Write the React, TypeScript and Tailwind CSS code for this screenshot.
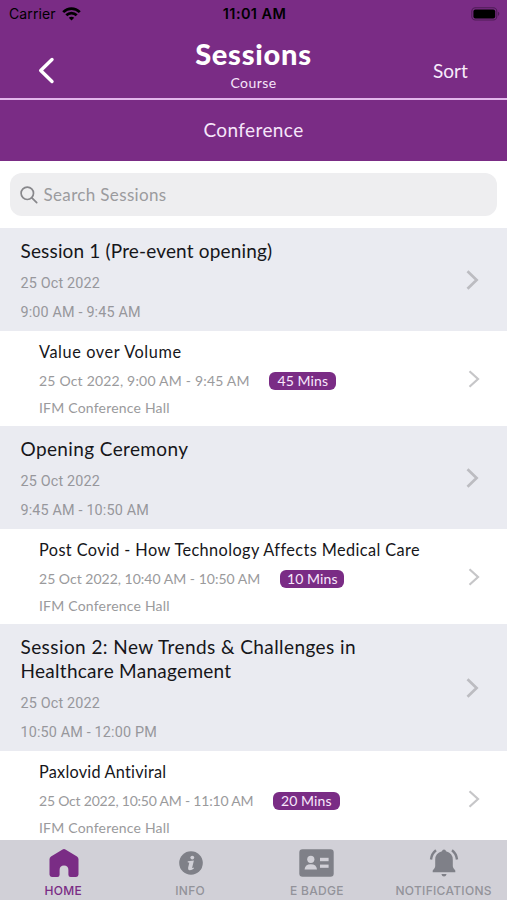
import React from "react";

type Talk = { title: string; when: string; whenTracking: string; titleTracking: string; mins: string; badge: string };
type Session = { title: string[]; time: string; tracking: string[]; talk: Talk };

const sessions: Session[] = [
  {
    title: ["Session 1 (Pre-event opening)"],
    time: "9:00 AM - 9:45 AM",
    tracking: ["tracking-[0.16px]"],
    talk: {
      title: "Value over Volume",
      titleTracking: "tracking-[0.6px]",
      when: "25 Oct 2022, 9:00 AM - 9:45 AM",
      whenTracking: "tracking-[0.2px]",
      mins: "45 Mins",
      badge: "ml-[19.5px] w-[67px]",
    },
  },
  {
    title: ["Opening Ceremony"],
    time: "9:45 AM - 10:50 AM",
    tracking: ["tracking-[0.38px]"],
    talk: {
      title: "Post Covid - How Technology Affects Medical Care",
      titleTracking: "tracking-[0.4px]",
      when: "25 Oct 2022, 10:40 AM - 10:50 AM",
      whenTracking: "tracking-[0.01px]",
      mins: "10 Mins",
      badge: "ml-5 w-[64px]",
    },
  },
  {
    title: ["Session 2: New Trends & Challenges in", "Healthcare Management"],
    time: "10:50 AM - 12:00 PM",
    tracking: ["tracking-[0.42px]", "tracking-[0.28px]"],
    talk: {
      title: "Paxlovid Antiviral",
      titleTracking: "tracking-[0.22px]",
      when: "25 Oct 2022, 10:50 AM - 11:10 AM",
      whenTracking: "tracking-[-0.21px]",
      mins: "20 Mins",
      badge: "ml-[19.5px] w-[67px]",
    },
  },
];

function SectionRow({ s }: { s: Session }) {
  return (
    <div className={`flex shrink-0 items-center justify-between bg-[#eaebf1] pl-[20.5px] pr-[28px] ${s.title.length > 1 ? "h-[127px]" : "h-[103px]"}`}>
      <div className="h-full pt-[11px] whitespace-nowrap">
        {s.title.map((line, i) => (
          <div key={line} className={`h-[24px] text-[19px] leading-[24px] text-[#16161a] ${s.tracking[i]}`}>{line}</div>
        ))}
        <div className="mt-[10px] font-[Roboto] text-[14.4px] leading-[22px] tracking-[0.15px] text-[#97979c]">25 Oct 2022</div>
        <div className="mt-[7px] font-[Roboto] text-[14.4px] leading-[22px] tracking-[0.15px] text-[#97979c]">{s.time}</div>
      </div>
      <svg width="13" height="22" viewBox="0 0 13 22" fill="none" stroke="#bcbcc1" strokeWidth="2.7" className="mt-[1px]">
        <path d="M1.5 2.3 L10.6 11 L1.5 19.7" />
      </svg>
    </div>
  );
}

function TalkRow({ t }: { t: Talk }) {
  return (
    <div className="flex h-[95px] shrink-0 items-center justify-between bg-white pl-[39px] pr-[27px]">
      <div className="h-full pt-[11px] whitespace-nowrap">
        <div className={`text-[16.3px] leading-[20px] text-[#16161a] ${t.titleTracking}`}>{t.title}</div>
        <div className="mt-[9px] flex h-[20px] items-center">
          <span className={`text-[14px] leading-[20px] text-[#9a9a9c] ${t.whenTracking}`}>{t.when}</span>
          <span className={`flex h-[18px] items-center justify-center rounded-[6px] bg-[#7a2c85] text-[14px] leading-[18px] tracking-[0.1px] text-[#f8e8fc] ${t.badge}`}>{t.mins}</span>
        </div>
        <div className="mt-[7px] text-[14px] leading-[20px] tracking-[0.2px] text-[#9a9a9c]">IFM Conference Hall</div>
      </div>
      <svg width="12" height="18" viewBox="0 0 12 18" fill="none" stroke="#c6c6c8" strokeWidth="2.2">
        <path d="M1.5 1.3 L10 9 L1.5 16.7" />
      </svg>
    </div>
  );
}

function TabItem({ label, active, children }: { label: string; active?: boolean; children: React.ReactNode }) {
  return (
    <div className={`flex flex-1 flex-col items-center ${active ? "text-[#7a2c85]" : "text-[#7f8088]"}`}>
      <div className="flex h-[40px] items-center justify-center pt-[5px]">{children}</div>
      <div className={`mt-[2px] font-[Inter] text-[12px] leading-[18px] font-medium tracking-[0.3px] whitespace-nowrap ${active ? "" : "text-[#93939a]"}`}>{label}</div>
    </div>
  );
}

export default function App() {
  return (
    <div className="flex h-[900px] w-[507px] flex-col overflow-hidden bg-white font-[Lato,sans-serif]">
      <header className="flex h-[161px] shrink-0 flex-col bg-[#7a2c85]">
        <div className="grid h-[28px] grid-cols-3 items-center pr-[7px] pl-[9px] font-[Inter] text-black">
          <div className="flex items-center gap-[6px]">
            <span className="text-[14px] leading-[20px] tracking-[0.1px]">Carrier</span>
            <svg width="19" height="14" viewBox="0 0 19 14" fill="none" stroke="black" strokeWidth="2.7">
              <path d="M1.2 5.1 C6 0.4 13 0.4 17.8 5.1" />
              <path d="M4.3 8.3 C7.2 5.4 11.8 5.4 14.7 8.3" />
              <path d="M9.5 13.5 L6.8 10.7 C8.2 9.4 10.8 9.4 12.2 10.7 Z" fill="black" stroke="none" />
            </svg>
          </div>
          <div className="text-center text-[14.5px] leading-[20px] font-semibold tracking-[0.4px] whitespace-nowrap">11:01 AM</div>
          <div className="flex justify-end">
            <svg width="29" height="14" viewBox="0 0 29 14">
              <rect x="0.8" y="0.8" width="25" height="12.2" rx="3.6" fill="none" stroke="#4f1c57" strokeWidth="1.1" />
              <rect x="2.4" y="2.4" width="21.8" height="9" rx="2" fill="black" />
              <path d="M27 4.8 C28.8 5.5 28.8 8.3 27 9 Z" fill="#4f1c57" />
            </svg>
          </div>
        </div>
        <div className="grid h-[70px] grid-cols-[120px_1fr_120px] text-white">
          <div className="pt-[29px] pl-[38px]">
            <svg width="17" height="27" viewBox="0 0 17 27" fill="none" stroke="white" strokeWidth="3.4" strokeLinecap="round" strokeLinejoin="round">
              <path d="M14 2.5 L2.7 13.5 L14 24.5" />
            </svg>
          </div>
          <div className="pt-[9px] text-center">
            <div className="text-[29px] leading-[34px] font-black tracking-[0.75px]">Sessions</div>
            <div className="mt-[3px] text-[14px] leading-[18px] tracking-[0.45px] text-[#f6e6fa]">Course</div>
          </div>
          <div className="pt-[30px] pl-[46px] text-[19px] leading-[25px] text-[#f8ebfb]">Sort</div>
        </div>
        <div className="h-[2px] bg-[#e3b6ec]" />
        <div className="flex flex-1 items-center justify-center text-[19px] tracking-[0.4px] text-[#f6e6fa]">Conference</div>
      </header>

      <div className="h-[67px] shrink-0 px-[10px] pt-[12px]">
        <div className="flex h-[43px] w-[487px] items-center rounded-[12px] bg-[#eeeef0] pl-[10px]">
          <svg width="18" height="18" viewBox="0 0 18 18" fill="none" stroke="#87878b" strokeWidth="1.7" strokeLinecap="round">
            <circle cx="7.3" cy="7.3" r="6.2" />
            <path d="M11.9 11.9 L16.7 16.7" />
          </svg>
          <span className="ml-[5.5px] text-[17px] tracking-[0.35px] text-[#9b9b9e]">Search Sessions</span>
        </div>
      </div>

      <main className="flex h-[612px] shrink-0 flex-col overflow-hidden">
        {sessions.map((s) => (
          <React.Fragment key={s.time}>
            <SectionRow s={s} />
            <TalkRow t={s.talk} />
          </React.Fragment>
        ))}
      </main>

      <nav className="flex h-[60px] shrink-0 bg-[#d1d0d7]">
        <TabItem label="HOME" active>
          <svg width="30" height="30" viewBox="0 0 30 30" fill="currentColor" className="ml-[1px]">
            <path d="M13.6 1.5 Q15 .6 16.4 1.5 L28 8.6 Q29.5 9.6 29.5 11.3 V26.6 Q29.5 29 27.1 29 H21.6 Q19.4 29 19.4 26.8 V22 Q19.4 17.4 15 17.4 Q10.6 17.4 10.6 22 V26.8 Q10.6 29 8.4 29 H2.9 Q.5 29 .5 26.6 V11.3 Q.5 9.6 2 8.6 Z" />
          </svg>
        </TabItem>
        <TabItem label="INFO">
          <svg width="24" height="24" viewBox="0 0 24 24" className="ml-[1px]">
            <circle cx="12" cy="12" r="11.8" fill="currentColor" />
            <circle cx="13.3" cy="6.6" r="1.9" fill="#d1d0d7" />
            <path d="M8.8 10.2 L14.9 9.5 L13.2 16.6 Q13.1 17.4 14.5 16.4 L15.1 17.2 Q12.9 19.5 10.5 19.3 Q8.6 18.9 9.1 16.8 L10.3 11.8 L8.6 11.3 Z" fill="#d1d0d7" />
          </svg>
        </TabItem>
        <TabItem label="E BADGE">
          <svg width="35" height="28" viewBox="0 0 35 28">
            <rect x=".3" y=".3" width="34.4" height="27.4" rx="3.2" fill="currentColor" />
            <g fill="#d1d0d7">
              <circle cx="11.8" cy="10.3" r="3.6" />
              <path d="M5.6 20.5 Q6 15.3 11.8 15.3 Q17.6 15.3 18 20.5 Z" />
              <rect x="21" y="8.8" width="8.6" height="3.4" />
              <rect x="21" y="15.6" width="8.6" height="3.2" />
            </g>
          </svg>
        </TabItem>
        <TabItem label="NOTIFICATIONS">
          <svg width="30" height="28" viewBox="0 0 30 28" fill="currentColor">
            <path d="M15 .5 Q16.8 .5 17 2.3 Q23.8 4 23.8 10.8 V17.3 Q23.8 19.4 26.3 21.5 V23.2 H3.7 V21.5 Q6.2 19.4 6.2 17.3 V10.8 Q6.2 4 13 2.3 Q13.2 .5 15 .5 Z" />
            <path d="M12.4 25 H17.6 Q17 27.6 15 27.6 Q13 27.6 12.4 25 Z" />
            <path d="M7 1.3 Q2.7 4.6 2 10.5 M23 1.3 Q27.3 4.6 28 10.5" fill="none" stroke="currentColor" strokeWidth="2.4" />
          </svg>
        </TabItem>
      </nav>
    </div>
  );
}
